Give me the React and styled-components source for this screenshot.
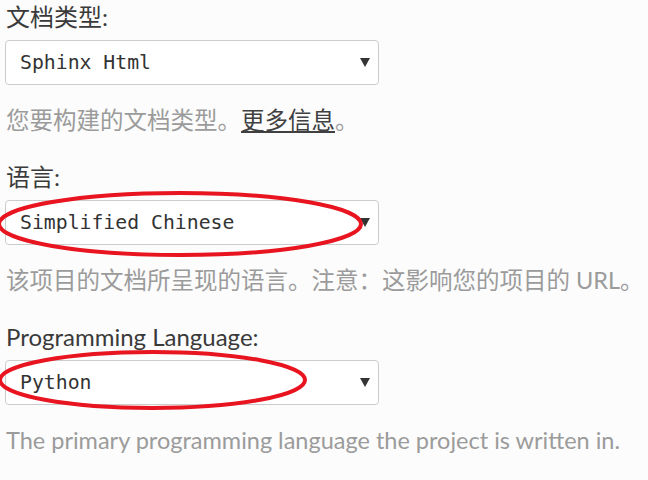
import React from "react";
import styled, { createGlobalStyle } from "styled-components";

const GlobalStyle = createGlobalStyle`
  html, body {
    margin: 0;
    padding: 0;
    background: #fcfcfc;
  }
  body {
    font-family: Lato, "Noto Sans CJK SC", sans-serif;
    color: #404040;
  }
`;

const Page = styled.div`
  padding: 2px 0 0 6px;
  width: 648px;
  box-sizing: border-box;
`;

const Field = styled.div`
  position: relative;
  display: flex;
  flex-direction: column;
  margin-bottom: ${(p) => p.gap || 0}px;
`;

const Label = styled.label`
  font-size: 24px;
  line-height: 30px;
  color: #3a3a3a;
  margin-bottom: 8px;
`;

const SelectBox = styled.div`
  display: flex;
  align-items: center;
  justify-content: space-between;
  box-sizing: border-box;
  width: 374px;
  height: 45px;
  margin-left: -1px;
  padding: 0 8px 0 14px;
  background: #fff;
  border: 1px solid #ccc;
  border-radius: 4px;
  font-family: "DejaVu Sans Mono", "Liberation Mono", monospace;
  font-size: 19.8px;
  color: #333;
`;

const Arrow = styled.span`
  width: 0;
  height: 0;
  border-left: 5px solid transparent;
  border-right: 5px solid transparent;
  border-top: 9px solid #333;
`;

const Help = styled.p`
  margin: 19px 0 0;
  font-size: 23.5px;
  line-height: 32px;
  color: #9b9b9b;
  white-space: nowrap;
`;

const More = styled.a`
  color: #404040;
  text-decoration: underline;
`;

const Mark = styled.svg`
  position: absolute;
  left: ${(p) => p.x}px;
  top: ${(p) => p.y}px;
  pointer-events: none;
  overflow: visible;
`;

const Select = ({ value }) => (
  <SelectBox>
    <span>{value}</span>
    <Arrow />
  </SelectBox>
);

const Circle = ({ x, y, w, h }) => (
  <Mark x={x} y={y} width={w} height={h}>
    <ellipse
      cx={w / 2}
      cy={h / 2}
      rx={w / 2 - 2}
      ry={h / 2 - 2}
      fill="none"
      stroke="#e8141f"
      strokeWidth="4"
    />
  </Mark>
);

export default function App() {
  return (
    <>
      <GlobalStyle />
      <Page>
        <Field gap={26}>
          <Label>文档类型:</Label>
          <Select value="Sphinx Html" />
          <Help>
            您要构建的文档类型。<More>更多信息</More>。
          </Help>
        </Field>
        <Field gap={26}>
          <Label>语言:</Label>
          <Select value="Simplified Chinese" />
          <Help>该项目的文档所呈现的语言。注意：这影响您的项目的 URL。</Help>
          <Circle x={-9} y={29} w={366} h={66} />
        </Field>
        <Field>
          <Label>Programming Language:</Label>
          <Select value="Python" />
          <Help>The primary programming language the project is written in.</Help>
          <Circle x={-8} y={28} w={309} h={60} />
        </Field>
      </Page>
    </>
  );
}
